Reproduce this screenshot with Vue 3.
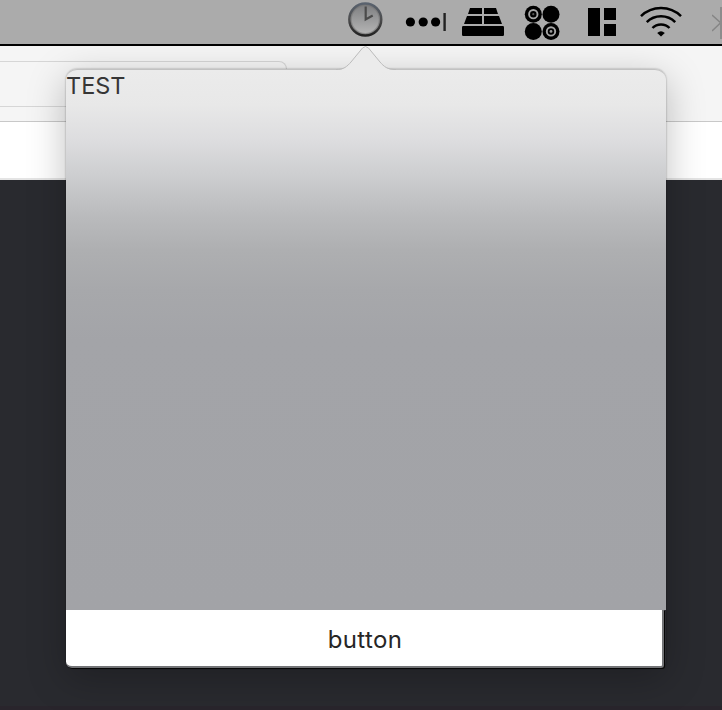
<script setup>
const label = 'TEST'
const action = 'button'
</script>

<template>
  <div class="desktop">
    <header class="menubar">
      <svg class="clock" width="38" height="40" viewBox="346 0 38 40">
        <defs>
          <linearGradient id="face" x1="0" y1="0" x2="0" y2="1">
            <stop offset="0" stop-color="#7c7d7f" />
            <stop offset="1" stop-color="#b8b8b8" />
          </linearGradient>
          <linearGradient id="rim" x1="0" y1="0" x2="0" y2="1">
            <stop offset="0" stop-color="#59626e" />
            <stop offset=".5" stop-color="#4c4c4d" />
            <stop offset="1" stop-color="#222" />
          </linearGradient>
        </defs>
        <circle cx="365.3" cy="19.5" r="15.9" fill="url(#face)" stroke="url(#rim)" stroke-width="2.6" />
        <circle cx="365.3" cy="19.5" r="14.2" fill="none" stroke="#777" stroke-opacity=".6" stroke-width="1.4" />
        <path d="M365.7 6.5V19.4L372.7 15.5" fill="none" stroke="#4b4b4b" stroke-width="2.2" />
      </svg>
      <svg class="dots" width="42" height="40" viewBox="405 0 42 40">
        <circle cx="410.4" cy="22" r="4.6" />
        <circle cx="423.2" cy="22" r="4.6" />
        <circle cx="435.6" cy="22" r="4.6" />
        <rect x="443.4" y="13" width="2.4" height="18" fill="#222" />
      </svg>
      <svg class="tray" width="42" height="40" viewBox="462 0 42 40">
        <path d="M470 8H482V14H468ZM484 8H496L498 14H484ZM467 16H482V24H464ZM484 16H499L502 24H484Z" />
        <rect x="462" y="26" width="42" height="10" rx="1.2" />
      </svg>
      <svg class="discs" width="36" height="42" viewBox="524 0 36 42">
        <circle cx="533.3" cy="14.2" r="8.5" />
        <circle cx="551" cy="14.2" r="8.5" />
        <circle cx="533.3" cy="31.4" r="8.5" />
        <circle cx="551" cy="31.4" r="8.5" />
        <g fill="none" stroke="#a6a6a6" stroke-width="1.9">
          <circle cx="533.3" cy="14.2" r="4.2" />
          <circle cx="551" cy="31.4" r="4.2" />
        </g>
        <circle cx="533.3" cy="14.2" r="1.1" fill="#555" />
        <circle cx="551" cy="31.4" r="1.4" fill="#999" />
      </svg>
      <svg class="blocks" width="28" height="40" viewBox="588 0 28 40">
        <path d="M588 8H600V36H588ZM604 8H616V20H604ZM604 24H616V36H604Z" />
      </svg>
      <svg class="wifi" width="42" height="40" viewBox="640 0 42 40">
        <g fill="none" stroke="#000" stroke-width="2.5">
          <path d="M641 16.2C652 5.3 670 5.3 681 16.2" />
          <path d="M646.8 22.2C654.5 14.3 667.5 14.3 675.2 22.2" />
          <path d="M652.5 28C657 23.2 665 23.2 669.5 28" />
        </g>
        <path d="M657.2 33Q661 29.4 664.8 33L661 36.4Z" />
      </svg>
      <svg class="bluetooth" width="10" height="44" viewBox="712 0 10 44">
        <path d="M712 15L722 24M712 31L722 21.5" fill="none" stroke="#858585" stroke-width="1.5" />
        <rect x="720" y="7" width="2" height="32" fill="#8c8c8c" />
      </svg>
    </header>
    <div class="toolbar"><div class="tab"></div></div>
    <div class="strip"></div>
    <main class="content"></main>
    <div class="edge"></div>

    <section class="popover">
      <svg class="arrow" width="60" height="24" viewBox="0 0 60 24">
        <path class="arrow-fill" d="M0 24C8 24 11 20.5 15 16L26.5 2Q29.5 -1 32.5 2L44 16C48 20.5 51 24 60 24Z" />
        <path class="arrow-line" d="M0 23.5C8 23.5 11 20.5 15 16L26.5 2Q29.5 -1 32.5 2L44 16C48 20.5 51 23.5 60 23.5" />
      </svg>
      <div class="panel"><span class="title">{{ label }}</span></div>
      <button class="action">{{ action }}</button>
    </section>
  </div>
</template>

<style>
body { margin: 0; }
</style>

<style scoped>
.desktop {
  position: relative;
  display: flex;
  flex-direction: column;
  width: 722px;
  height: 710px;
  overflow: hidden;
  font-family: Inter, "Liberation Sans", sans-serif;
}
.menubar {
  display: flex;
  box-sizing: border-box;
  height: 46px;
  flex: none;
  padding-left: 346px;
  background: #ababab;
  border-bottom: 2px solid #000;
}
.menubar svg { flex: none; display: block; }
.dots { margin-left: 21px; }
.tray { margin-left: 15px; }
.discs { margin-left: 20px; }
.blocks { margin-left: 28px; }
.wifi { margin-left: 24px; }
.bluetooth { margin-left: 30px; }
.toolbar {
  box-sizing: border-box;
  height: 76px;
  flex: none;
  padding-top: 15px;
  background: #f5f5f5;
  border-bottom: 1px solid #c8c8c8;
}
.tab {
  box-sizing: border-box;
  width: 287px;
  height: 46px;
  border: 1px solid #d6d6d6;
  border-left: 0;
  border-radius: 0 8px 0 0;
}
.strip {
  box-sizing: border-box;
  height: 58px;
  flex: none;
  background: #fff;
  border-bottom: 2px solid #e4e4e4;
}
.content { flex: 1; background: #292a2f; }
.edge { height: 4px; background: #29252c; }
.popover {
  position: absolute;
  left: 66px;
  top: 69px;
  width: 600px;
  height: 599px;
  border-radius: 11px 11px 6px 6px;
  box-shadow: 0 0 2px rgba(0, 0, 0, .4), 0 10px 38px rgba(0, 0, 0, .25);
  clip-path: inset(-23px -60px -60px -60px);
}
.arrow { position: absolute; left: 270px; top: -23px; z-index: 1; }
.arrow-fill { fill: #ebebeb; }
.arrow-line { fill: none; stroke: #bcbcbc; stroke-width: 1; }
.panel {
  box-sizing: border-box;
  height: 541px;
  padding: 1px 0 0;
  border-radius: 11px 11px 0 0;
  border-top: 1px solid #c2c2c2;
  background: linear-gradient(#ebebeb 0, #e8e8e8 35px, #dddddf 70px, #cdced0 105px, #babbbd 145px, #aeafb1 180px, #a7a8ab 220px, #a3a4a8 270px, #a2a3a7 100%);
}
.title {
  display: block;
  font-size: 23.5px;
  line-height: 30px;
  color: #363636;
}
.action {
  display: block;
  box-sizing: border-box;
  width: 598px;
  height: 58px;
  padding: 3px 0 0 2px;
  border: solid #737477;
  border-width: 0 2px 2px 0;
  border-radius: 0 0 3px 6px;
  background: #fff;
  box-shadow: 1px 1px 0 #050505;
  font: 24px/53px Inter, "Liberation Sans", sans-serif;
  letter-spacing: .35px;
  color: #262626;
}
</style>
